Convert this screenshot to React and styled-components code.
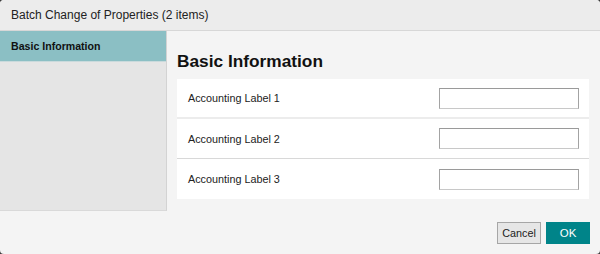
import React from 'react'
import styled, { createGlobalStyle } from 'styled-components'

const GlobalStyle = createGlobalStyle`
  html, body {
    margin: 0;
    padding: 0;
    background: #3c3c3c;
  }
  body {
    font-family: "Liberation Sans", Arial, sans-serif;
  }
`

const labels = ['Accounting Label 1', 'Accounting Label 2', 'Accounting Label 3']

const App = () => {
  return <>
    <GlobalStyle />
    <Dialog>
      <TitleBar>Batch Change of Properties (2 items)</TitleBar>
      <Body>
        <Sidebar>
          <NavItem $active>Basic Information</NavItem>
        </Sidebar>
        <Content>
          <Heading>Basic Information</Heading>
          <Panel>
            {labels.map((label, i) => (
              <Row key={label} $index={i}>
                <Label>{label}</Label>
                <TextInput type='text' />
              </Row>
            ))}
          </Panel>
        </Content>
      </Body>
      <Footer>
        <Button>Cancel</Button>
        <Button $primary>OK</Button>
      </Footer>
    </Dialog>
  </>
}

const Dialog = styled.div`
  width: 600px;
  height: 254px;
  border-radius: 4px;
  overflow: hidden;
  background: #f4f4f4;
  display: flex;
  flex-direction: column;
`

const TitleBar = styled.div`
  height: 31px;
  box-sizing: border-box;
  border-bottom: 1px solid #d7d7d7;
  background: #ececec;
  padding: 0 0 1px 11px;
  display: flex;
  align-items: center;
  font-size: 12px;
  color: #222;
`

const Body = styled.div`
  display: flex;
  height: 180px;
`

const Sidebar = styled.div`
  width: 167px;
  box-sizing: border-box;
  background: #e5e5e5;
  border-right: 1px solid #d3d3d3;
  border-bottom: 1px solid #d9d9d9;
`

const NavItem = styled.div`
  height: 31px;
  box-sizing: border-box;
  padding: 0 0 1px 11px;
  display: flex;
  align-items: center;
  background: ${p => (p.$active ? '#8bbfc4' : 'transparent')};
  border-bottom: 1px solid #c9dadc;
  font-size: 10.6px;
  font-weight: bold;
  color: #111;
`

const Content = styled.div`
  flex: 1;
  padding: 0 11px 0 10px;
  display: flex;
  flex-direction: column;
`

const Heading = styled.h2`
  margin: 0;
  height: 48px;
  box-sizing: border-box;
  padding-top: 20px;
  font-size: 17.3px;
  line-height: 20px;
  font-weight: bold;
  color: #111;
`

const Panel = styled.div`
  background: #fff;
  display: flex;
  flex-direction: column;
`

const Row = styled.div`
  display: flex;
  align-items: center;
  justify-content: space-between;
  padding: 0 10px 0 11px;
  height: ${p => (p.$index === 0 ? 38 : p.$index === 1 ? 39 : 40)}px;
  border-bottom: ${p => (p.$index === 0 ? '2px solid #ececec' : p.$index === 1 ? '1px solid #d8d8d8' : 'none')};
`

const Label = styled.span`
  font-size: 10.8px;
  color: #222;
`

const TextInput = styled.input`
  width: 140px;
  height: 21px;
  box-sizing: border-box;
  margin: 0;
  border: 1px solid #a3a3a3;
  border-top-color: #9a9a9a;
  border-bottom-color: #c8c8c8;
  background: #fff;
  outline: none;
  padding: 0 3px;
`

const Footer = styled.div`
  flex: 1;
  display: flex;
  justify-content: flex-end;
  align-items: flex-start;
  gap: 5px;
  padding: 11px 10px 0 0;
`

const Button = styled.button`
  width: 44px;
  height: 22px;
  box-sizing: border-box;
  margin: 0;
  padding: 0;
  font-family: "Liberation Sans", Arial, sans-serif;
  font-size: ${p => (p.$primary ? '11.5px' : '10.8px')};
  color: ${p => (p.$primary ? '#fff' : '#222')};
  background: ${p => (p.$primary ? '#008489' : '#e6e6e6')};
  border: 1px solid ${p => (p.$primary ? '#008489' : '#a6a6a6')};
  cursor: pointer;
`

export default App
